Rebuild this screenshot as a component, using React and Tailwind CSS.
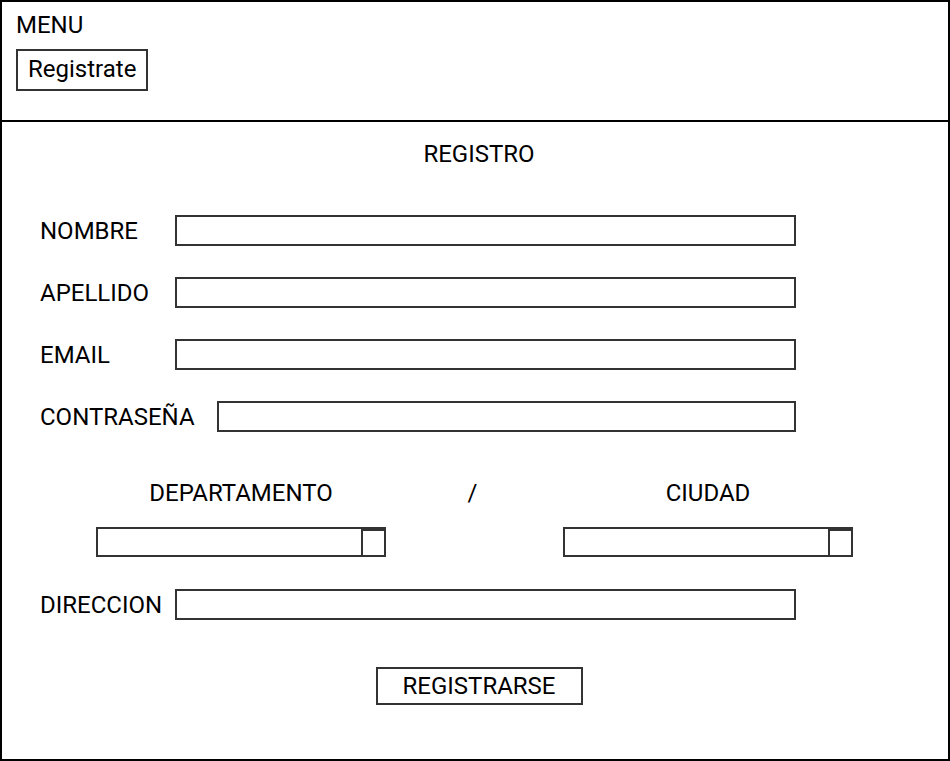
const boxClass = "h-[31px] min-w-0 flex-1 border-2 border-[#333333] bg-white px-2 text-lg outline-none";

function Field({ id, label, type = "text", wide = false }) {
  return (
    <div className="flex h-8 items-start">
      <label htmlFor={id} className={wide ? "w-[177px] shrink-0" : "w-[135px] shrink-0"}>
        {label}
      </label>
      <input id={id} name={id} type={type} className={boxClass} />
    </div>
  );
}

function Dropdown({ id, label }) {
  return (
    <div className="flex flex-1 flex-col">
      <label htmlFor={id} className="mb-[18px] text-center">
        {label}
      </label>
      <div className="relative h-[30px]">
        <select
          id={id}
          name={id}
          className="block h-full w-full appearance-none rounded-none border-2 border-[#333333] bg-white px-2 text-lg outline-none"
        />
        <span
          aria-hidden="true"
          className="pointer-events-none absolute top-[2px] right-0 bottom-0 w-[25px] border-2 border-[#333333]"
        />
      </div>
    </div>
  );
}

export default function App() {
  return (
    <div className="flex min-h-screen flex-col border-2 border-black bg-white font-['Roboto',sans-serif] text-[24px] leading-[32px] text-black">
      <header className="flex flex-col items-start gap-2 border-b-2 border-black px-[14px] pt-[7px] pb-[29px]">
        <span>MENU</span>
        <button type="button" className="border-2 border-[#333333] px-[10px] pt-[2px] pb-[4px]">
          Registrate
        </button>
      </header>
      <main className="flex-1 pt-4 pr-[30px] pb-[54px] pl-[38px]">
        <h1 className="text-center">REGISTRO</h1>
        <form className="mt-[45px] flex flex-col" onSubmit={(e) => e.preventDefault()}>
          <div className="mr-[122px] flex flex-col gap-[30px]">
            <Field id="nombre" label="NOMBRE" />
            <Field id="apellido" label="APELLIDO" />
            <Field id="email" label="EMAIL" type="email" />
            <Field id="contrasena" label="CONTRASEÑA" type="password" wide />
          </div>
          <div className="mt-11 mr-[65px] ml-14 flex">
            <Dropdown id="departamento" label="DEPARTAMENTO" />
            <span className="w-[177px] pr-1 text-center">/</span>
            <Dropdown id="ciudad" label="CIUDAD" />
          </div>
          <div className="mt-8 mr-[122px]">
            <Field id="direccion" label="DIRECCION" />
          </div>
          <button
            type="submit"
            className="mt-[46px] self-center border-2 border-[#333333] px-[25px] py-[1px]"
          >
            REGISTRARSE
          </button>
        </form>
      </main>
    </div>
  );
}
